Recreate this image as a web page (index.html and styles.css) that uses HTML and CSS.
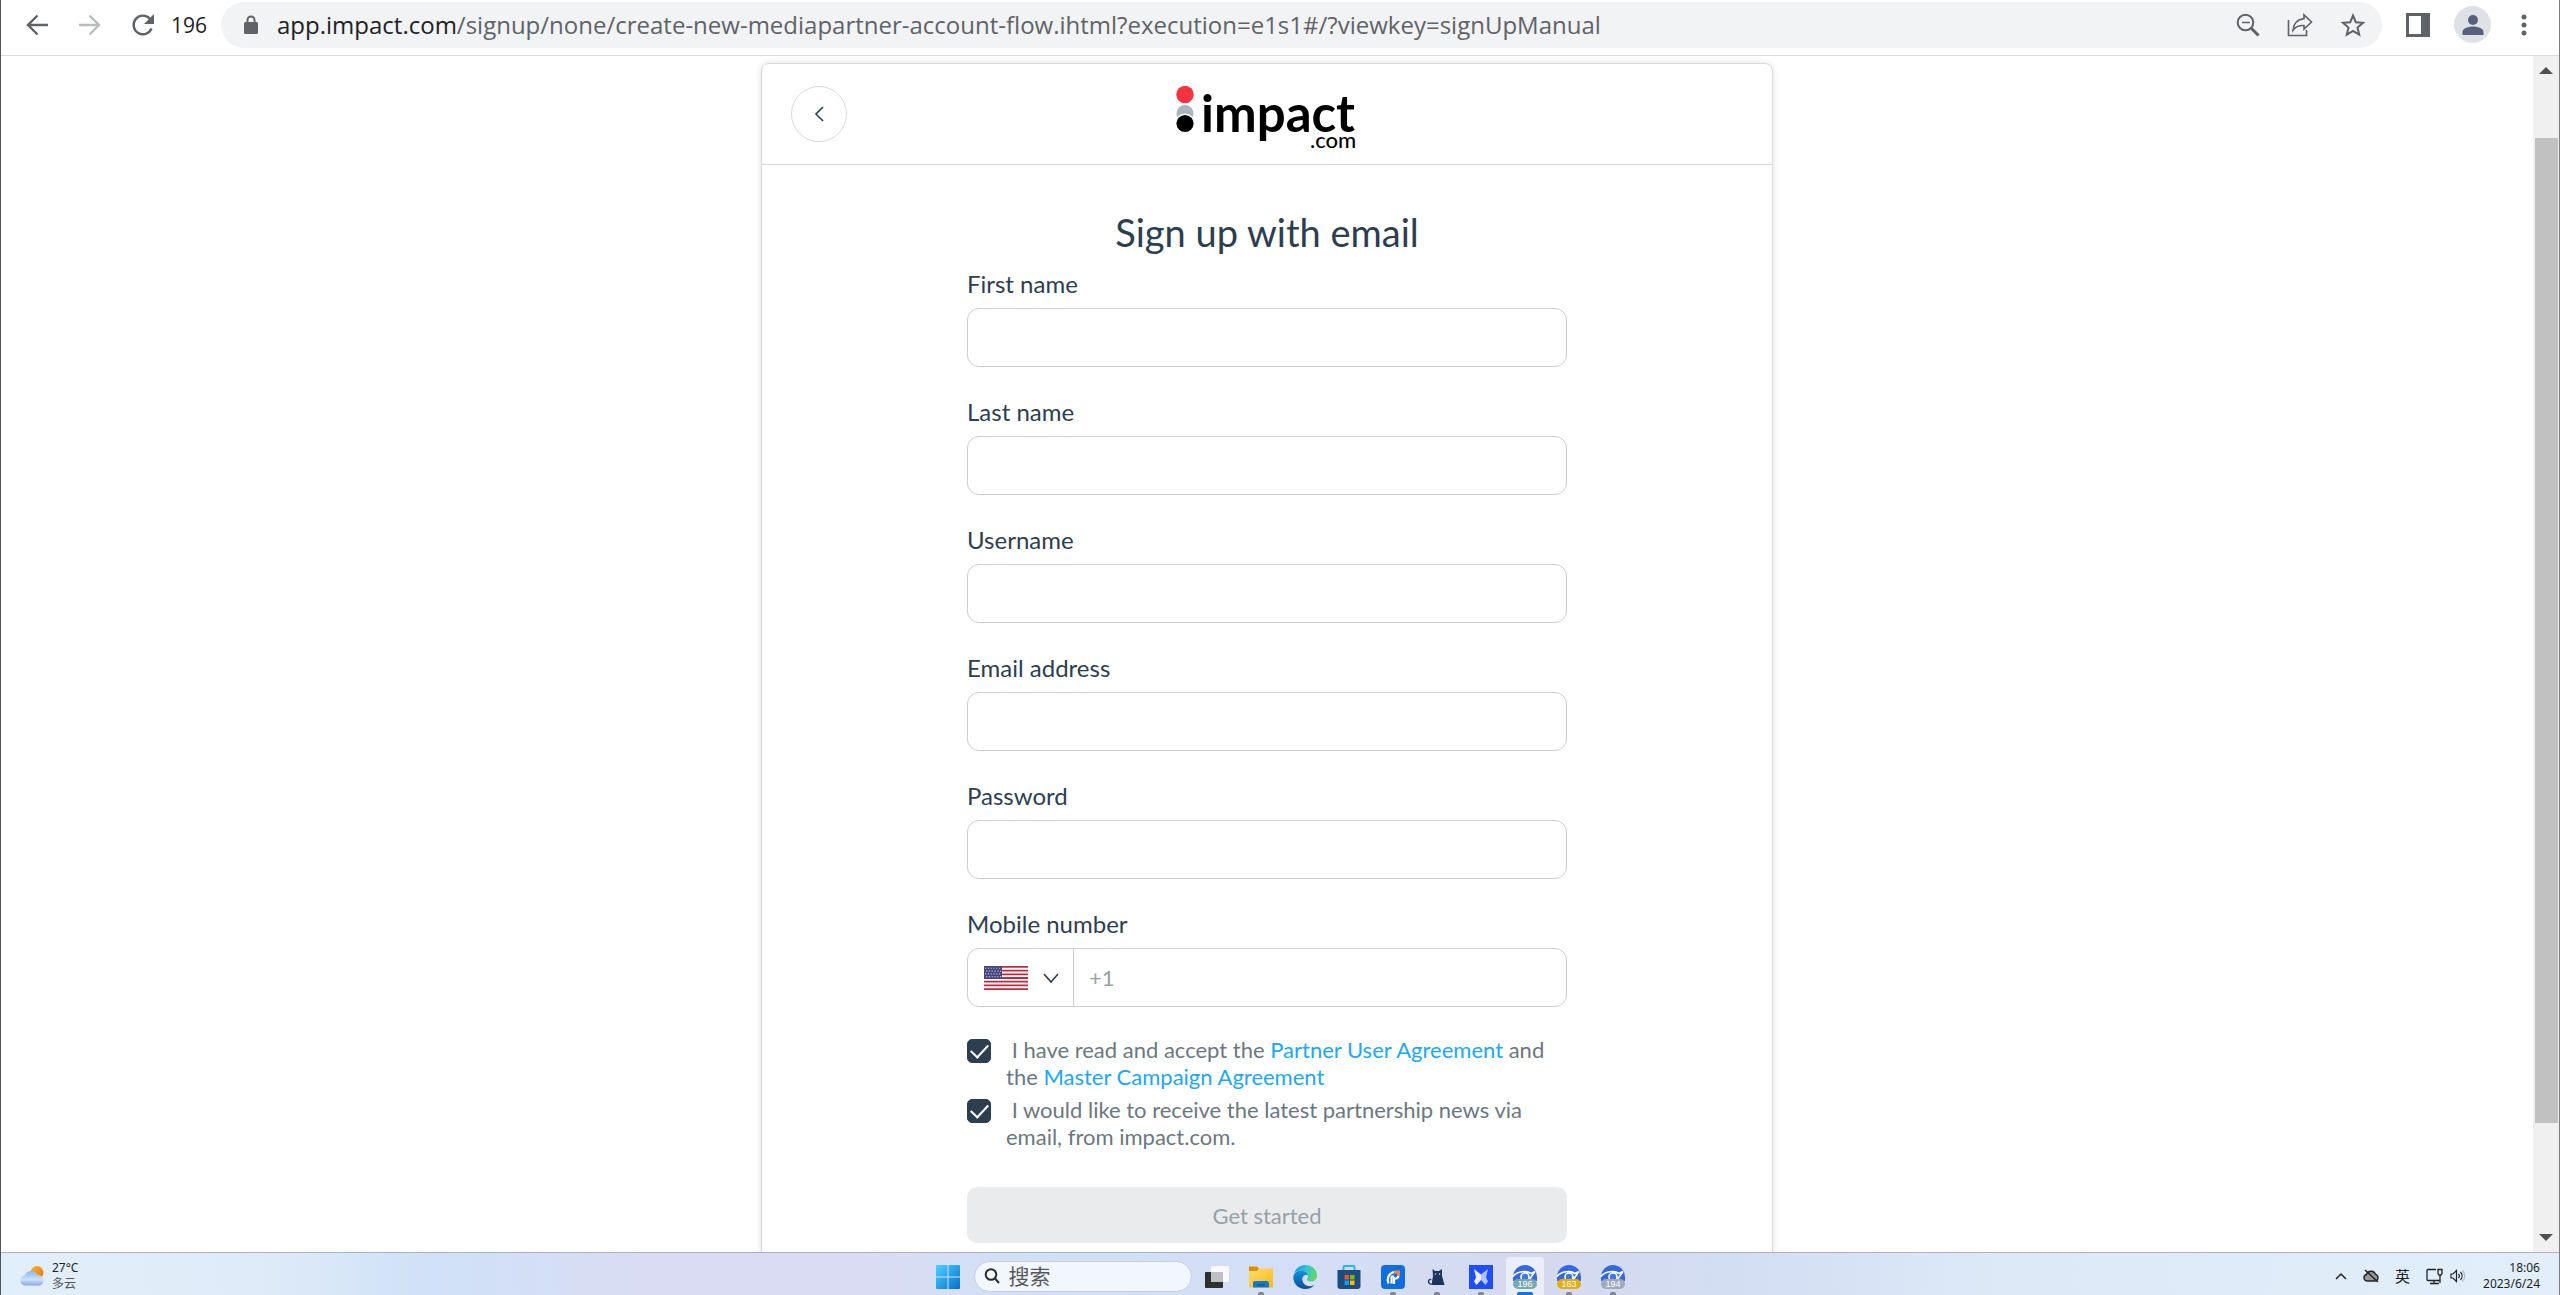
FILE: index.html
```
<!DOCTYPE html>
<html lang="en">
<head>
  <meta charset="UTF-8">
  <meta name="viewport" content="width=device-width, initial-scale=1.0">
  <title>Sign up | impact.com</title>
  <link rel="stylesheet" href="styles.css">
</head>
<body>
  <header class="toolbar">
    <div class="nav-buttons">
      <button class="icon-btn" aria-label="Back">
        <svg width="24" height="24" viewBox="0 0 24 24" fill="none" stroke="#5f6368" stroke-width="2.4"><path d="M23 12H3M12.500 2.500 3 12l9.500 9.500"/></svg>
      </button>
      <button class="icon-btn" aria-label="Forward" disabled>
        <svg width="24" height="24" viewBox="0 0 24 24" fill="none" stroke="#b9bbbe" stroke-width="2.400"><path d="M1 12h20M11.500 2.500 21 12l-9.500 9.500"/></svg>
      </button>
      <button class="icon-btn" aria-label="Reload">
        <svg width="24" height="24" viewBox="0 0 24 24"><path d="M20.500 15.500A9.300 9.300 0 1 1 18.700 5.600" fill="none" stroke="#5f6368" stroke-width="2.400"/><path d="M23 1v10H13z" fill="#5f6368"/></svg>
      </button>
    </div>
    <span class="profile-label">196</span>
    <div class="address-bar">
      <svg width="14" height="20" viewBox="0 0 14 20"><rect x="0" y="7" width="14" height="12" rx="1.500" fill="#5f6368"/><path d="M3.500 8V5a3.500 3.500 0 0 1 7 0v3" fill="none" stroke="#5f6368" stroke-width="2"/></svg>
      <div class="url"><span class="url-host">app.impact.com</span>/signup/none/create-new-mediapartner-account-flow.ihtml?execution=e1s1#/?viewkey=signUpManual</div>
      <div class="address-actions">
        <button class="icon-btn" aria-label="Zoom">
          <svg width="24" height="24" viewBox="0 0 24 24" fill="none" stroke="#5f6368"><circle cx="9.500" cy="9.500" r="7.800" stroke-width="2"/><path d="M6 9.500h8" stroke-width="1.500"/><path d="m15 15 7.500 7.500" stroke-width="3"/></svg>
        </button>
        <button class="icon-btn" aria-label="Share">
          <svg width="26" height="24" viewBox="0 0 26 24" fill="none" stroke="#5f6368" stroke-width="1.600"><path d="M1.500 7v15.500h18V17"/><path d="M17 1.800 24.500 9 17 16.200V12.500C12 12.300 8.500 13.600 6 17.200 6.500 10.500 10.500 6.300 17 5.600z"/></svg>
        </button>
        <button class="icon-btn" aria-label="Bookmark">
          <svg width="26" height="26" viewBox="0 0 26 26" fill="none" stroke="#5f6368" stroke-width="2"><path d="m13 3.500 2.800 6.700 7.200.6-5.500 4.700 1.700 7.100-6.200-3.800-6.200 3.800 1.700-7.100L3 10.800l7.200-.6z"/></svg>
        </button>
      </div>
    </div>
    <div class="toolbar-end">
      <button class="icon-btn" aria-label="Side panel">
        <svg width="24" height="24" viewBox="0 0 24 24"><path d="M0 0h24v24H0zM3 3v18h12V3z" fill="#5f6368" fill-rule="evenodd"/></svg>
      </button>
      <button class="icon-btn avatar" aria-label="Profile">
        <svg width="22" height="22" viewBox="0 0 22 22" fill="#56607a"><circle cx="11" cy="6" r="5"/><path d="M.5 21v-3C.5 14 7 12.500 11 12.500S21.500 14 21.500 18v3z"/></svg>
      </button>
      <button class="icon-btn" aria-label="Menu">
        <svg width="6" height="22" viewBox="0 0 6 22" fill="#5f6368"><circle cx="3" cy="3" r="2.500"/><circle cx="3" cy="11" r="2.500"/><circle cx="3" cy="19" r="2.500"/></svg>
      </button>
    </div>
  </header>

  <div class="viewport">
    <main class="page">
      <div class="card">
        <div class="card-header">
          <button class="back-btn" aria-label="Go back">
            <svg width="12" height="20" viewBox="0 0 12 20" fill="none" stroke="#2d3e50" stroke-width="1.600"><path d="M10 3 3 10l7 7"/></svg>
          </button>
          <svg class="logo" width="184" height="82" viewBox="0 0 184 82" role="img" aria-label="impact.com">
            <circle cx="10" cy="21.500" r="8.700" fill="#f8333f"/>
            <circle cx="10" cy="40.500" r="8.500" fill="#a9b4be"/>
            <circle cx="10" cy="50.500" r="10" fill="#fff"/>
            <circle cx="10" cy="50.500" r="8.600"/>
            <text class="logo-name" x="26" y="59">impact</text>
            <text class="logo-suffix" x="135" y="75">.com</text>
          </svg>
        </div>

        <form class="signup-form">
          <h1>Sign up with email</h1>

          <div class="field">
            <label for="first-name">First name</label>
            <input class="text-input" type="text" id="first-name">
          </div>
          <div class="field">
            <label for="last-name">Last name</label>
            <input class="text-input" type="text" id="last-name">
          </div>
          <div class="field">
            <label for="username">Username</label>
            <input class="text-input" type="text" id="username">
          </div>
          <div class="field">
            <label for="email">Email address</label>
            <input class="text-input" type="email" id="email">
          </div>
          <div class="field">
            <label for="password">Password</label>
            <input class="text-input" type="password" id="password">
          </div>
          <div class="field">
            <label for="mobile">Mobile number</label>
            <div class="phone">
              <div class="country">
                <svg width="44" height="24" viewBox="0 0 44 26" preserveAspectRatio="none">
                  <rect width="44" height="26" fill="#fff"/>
                  <path d="M0 1h44M0 5h44M0 9h44M0 13h44M0 17h44M0 21h44M0 25h44" stroke="#c02a41" stroke-width="2"/>
                  <rect width="18" height="14" fill="#46467f"/>
                  <path d="M1 2.500h16M2 5.500h16M1 8.500h16M2 11.500h16" stroke="#b9b9d2" stroke-width="1.200" stroke-dasharray="1.200 1.600"/>
                </svg>
                <svg width="16" height="12" viewBox="0 0 16 12" fill="none" stroke="#2d3e50" stroke-width="1.600"><path d="m1 2 7 8 7-8"/></svg>
                <select class="country-select" aria-label="Country code">
                  <option>+1</option>
                </select>
              </div>
              <input class="phone-input" type="tel" id="mobile" placeholder="+1">
            </div>
          </div>

          <div class="consents">
            <div class="consent">
              <input type="checkbox" id="terms" checked>
              <label for="terms">&nbsp;I have read and accept the <a href="#">Partner User Agreement</a> and the <a href="#">Master Campaign Agreement</a></label>
            </div>
            <div class="consent">
              <input type="checkbox" id="news" checked>
              <label for="news">&nbsp;I would like to receive the latest partnership news via email, from impact.com.</label>
            </div>
          </div>

          <button class="submit-btn" type="submit" disabled>Get started</button>
        </form>
      </div>
    </main>
    <div class="scrollbar">
      <svg width="14" height="8" viewBox="0 0 14 8"><path d="M7 0 14 7H0z" fill="#505050"/></svg>
      <div class="scroll-track"><div class="scroll-thumb"></div></div>
      <svg width="14" height="8" viewBox="0 0 14 8"><path d="M0 0h14L7 7z" fill="#505050"/></svg>
    </div>
  </div>

  <footer class="taskbar">
    <div class="weather">
      <svg width="24" height="22" viewBox="0 0 24 22">
        <defs>
          <linearGradient id="sun" x1="0" y1="0" x2="1" y2="1"><stop offset="0" stop-color="#f9b52c"/><stop offset="1" stop-color="#f0700c"/></linearGradient>
          <linearGradient id="cloud" x1="0" y1="0" x2="0" y2="1"><stop offset="0" stop-color="#8fb4ef"/><stop offset=".6" stop-color="#cfe0fb"/><stop offset="1" stop-color="#7fa4e6"/></linearGradient>
        </defs>
        <circle cx="17" cy="7.500" r="6.500" fill="url(#sun)"/>
        <path d="M5 20.500a5 5 0 0 1-.5-9.900 7 7 0 0 1 13-.6A5.300 5.300 0 0 1 19 20.500z" fill="url(#cloud)"/>
      </svg>
      <div class="weather-text"><span>27°C</span><span class="muted">多云</span></div>
    </div>

    <div class="apps">
      <button class="app" aria-label="Start">
        <svg width="24" height="24" viewBox="0 0 24 24">
          <defs><linearGradient id="win" x1="0" y1="0" x2="1" y2="1"><stop offset="0" stop-color="#4fd0ff"/><stop offset="1" stop-color="#0072d0"/></linearGradient></defs>
          <path d="M1 0h10.500v11.500H0V1a1 1 0 0 1 1-1zM12.500 0H23a1 1 0 0 1 1 1v10.500H12.500zM0 12.500h11.500V24H1a1 1 0 0 1-1-1zM12.500 12.500H24V23a1 1 0 0 1-1 1H12.500z" fill="url(#win)"/>
        </svg>
      </button>
      <label class="search">
        <svg width="16" height="16" viewBox="0 0 16 16" fill="none" stroke="#2b2b2b" stroke-width="2"><circle cx="7" cy="6.500" r="5.300"/><path d="m11 10.500 4 4.500"/></svg>
        <input type="text" placeholder="搜索" aria-label="搜索">
      </label>
      <button class="app" aria-label="Task view">
        <svg width="24" height="24" viewBox="0 0 24 24"><rect x="0" y="7" width="18" height="16" rx="1" fill="#2f3030"/><rect x="6" y="1" width="18" height="16" rx="1" fill="#fafafa"/><path d="M6 7h12v10H6z" fill="#bfc0c1"/></svg>
      </button>
      <button class="app running" aria-label="File Explorer">
        <svg width="24" height="24" viewBox="0 0 24 24">
          <defs><linearGradient id="folder" x1="0" y1="0" x2="1" y2="1"><stop offset="0" stop-color="#ffdd70"/><stop offset="1" stop-color="#fdb813"/></linearGradient></defs>
          <path d="M0 1.500h8l2 2-2 3H0z" fill="#d5930b"/><path d="M0 6h8l2-2.500h14V22.500H0z" fill="url(#folder)"/><path d="M4 22.500V18a2 2 0 0 1 2-2h12a2 2 0 0 1 2 2v4.500z" fill="#1379c8"/><path d="M8 20h8" stroke="#0a5799" stroke-width="1.500"/>
        </svg>
      </button>
      <button class="app" aria-label="Edge">
        <svg width="24" height="24" viewBox="0 0 24 24">
          <defs>
            <linearGradient id="edge-top" x1="0" y1="0.400" x2="1" y2="0.600"><stop offset="0" stop-color="#1b9de2"/><stop offset=".5" stop-color="#36c3d3"/><stop offset="1" stop-color="#62da55"/></linearGradient>
            <linearGradient id="edge-low" x1="0" y1="0" x2="0" y2="1"><stop offset="0" stop-color="#1590dd"/><stop offset="1" stop-color="#0b4d9c"/></linearGradient>
          </defs>
          <path d="M.8 9C2.500 3.500 7 0 12.500 0 19 0 24 4.800 24 10.500c0 4-3 6-6 6-2.500 0-4.200-1-4.200-2 0-.8 1.200-1.300 1.200-3.300C15 7.500 11 5.500 7.500 5.500 4.500 5.500 2 7 .8 9z" fill="url(#edge-top)"/>
          <path d="M.5 10.500C1.500 7.500 4.500 5.500 7.500 5.500c3.500 0 7 1.800 7.500 5-1-1-2.500-1-3.500-.3C7.500 12.500 9 19.500 15 21c2.500.6 5-.3 6.800-1.500C19.500 22.500 16 24 12 24 5 24-.8 18 .5 10.500z" fill="url(#edge-low)"/>
        </svg>
      </button>
      <button class="app" aria-label="Microsoft Store">
        <svg width="24" height="24" viewBox="0 0 24 24"><path d="M6.500 6V2a1 1 0 0 1 1-1h9a1 1 0 0 1 1 1v4" fill="none" stroke="#24b8e8" stroke-width="2"/><path d="M.5 5h23v16a3 3 0 0 1-3 3h-17a3 3 0 0 1-3-3z" fill="#1e4b80"/><path d="M7.500 10H12v4.500H7.500z" fill="#f25022"/><path d="M13 10h4.500v4.500H13z" fill="#7fba00"/><path d="M7.500 15.500H12V20H7.500z" fill="#00a4ef"/><path d="M13 15.500h4.500V20H13z" fill="#ffb900"/></svg>
      </button>
      <button class="app running" aria-label="Remote desktop">
        <svg width="24" height="24" viewBox="0 0 24 24"><rect width="24" height="24" rx="4" fill="#116ee0"/><path d="M7.500 18.500c-2-4-.5-10 5.500-11.500M10.500 18.500v-6c0-1 1-1.500 1.800-.9M13 19v-6c1 1 4.500.5 4.500-2.500" fill="none" stroke="#fff" stroke-width="2.200"/><path d="M13 5.500h6V11h-3V8.500h-3z" fill="#f58633"/></svg>
      </button>
      <button class="app running" aria-label="Cat">
        <svg width="24" height="24" viewBox="0 0 24 24"><path d="M7.500 4l2.500 2h4l3-2v7l2.500 9H8c-2-.5-.5-5 0-9z" fill="#1c3558"/><path d="M9 18.500c-3 1.500-5.500 0-5.500-2s2-2.500 2.500-1.500" fill="none" stroke="#1c3558" stroke-width="1.400"/><circle cx="10.500" cy="9" r=".8" fill="#cdd9ee"/><circle cx="14.500" cy="9" r=".8" fill="#cdd9ee"/></svg>
      </button>
      <button class="app running" aria-label="Butterfly">
        <svg width="24" height="24" viewBox="0 0 24 24"><rect width="24" height="24" fill="#1f4dfa"/><path d="m5 4 7 5.500V15l-4.500 5L5 16.500l2-4z" fill="#fff" opacity=".9"/><path d="m19 4-7 5.500V15l4.500 5 2.500-3.500-2-4z" fill="#fff" opacity=".65"/></svg>
      </button>
      <button class="app active" aria-label="Browser 196">
        <svg width="24" height="24" viewBox="0 0 24 24"><path d="M0 12a12 12 0 0 1 24 0v4H0z" fill="#3568e0"/><path d="M0 11.500C4 6 14 5.500 18 8.500L22 6.500M22 6.500 16 15" fill="none" stroke="#fff" stroke-width="1.600"/><circle cx="12" cy="12" r="4" fill="#3c78e8" stroke="#fff" stroke-width="1.600"/><rect y="14" width="24" height="10" rx="5" fill="#79a9ae"/><text class="badge-text" x="12" y="22">196</text></svg>
      </button>
      <button class="app running" aria-label="Browser 163">
        <svg width="24" height="24" viewBox="0 0 24 24"><path d="M0 12a12 12 0 0 1 24 0v4H0z" fill="#3568e0"/><path d="M0 11.500C4 6 14 5.500 18 8.500L22 6.500M22 6.500 16 15" fill="none" stroke="#fff" stroke-width="1.600"/><circle cx="12" cy="12" r="4" fill="#3c78e8" stroke="#fff" stroke-width="1.600"/><rect y="14" width="24" height="10" rx="5" fill="#e2ac17"/><text class="badge-text" x="12" y="22">163</text></svg>
      </button>
      <button class="app running" aria-label="Browser 194">
        <svg width="24" height="24" viewBox="0 0 24 24"><path d="M0 12a12 12 0 0 1 24 0v4H0z" fill="#3568e0"/><path d="M0 11.500C4 6 14 5.500 18 8.500L22 6.500M22 6.500 16 15" fill="none" stroke="#fff" stroke-width="1.600"/><circle cx="12" cy="12" r="4" fill="#3c78e8" stroke="#fff" stroke-width="1.600"/><rect y="14" width="24" height="10" rx="5" fill="#9fabbc"/><text class="badge-text" x="12" y="22">194</text></svg>
      </button>
    </div>

    <div class="tray">
      <svg width="12" height="8" viewBox="0 0 12 8" fill="none" stroke="#222" stroke-width="1.500"><path d="m1 7 5-5 5 5"/></svg>
      <svg width="16" height="14" viewBox="0 0 16 14"><path d="M4 12a3.300 3.300 0 0 1-.5-6.500 4.800 4.800 0 0 1 9-.2A3.500 3.500 0 0 1 12.500 12z" fill="#999" stroke="#222" stroke-width="1.300"/><path d="m2 1 13 12" stroke="#222" stroke-width="1.500"/></svg>
      <span class="ime">英</span>
      <span class="tray-pair">
        <svg width="17" height="17" viewBox="0 0 17 17" fill="none" stroke="#222" stroke-width="1.300"><path d="M10 1.500H2a1 1 0 0 0-1 1v9a1 1 0 0 0 1 1h12M8 12.500v3M4 15.500h9M12 1.500h4v4l-1 1.500h-2l-1-1.500zM14 7v8"/></svg>
        <svg width="17" height="14" viewBox="0 0 17 14" fill="none" stroke="#222" stroke-width="1.200"><path d="M1 5h2l3.500-3.500v11L3 9H1zM8.500 5a3 3 0 0 1 0 4M10.500 3a6 6 0 0 1 0 8"/><path d="M12.500 1.500a8 8 0 0 1 0 11" stroke="#b5bcc4"/></svg>
      </span>
      <div class="clock"><span>18:06</span><span>2023/6/24</span></div>
    </div>
  </footer>
</body>
</html>
```
FILE: styles.css
```
* {
  margin: 0;
  padding: 0;
  box-sizing: border-box;
}

body {
  height: 100vh;
  display: flex;
  flex-direction: column;
  overflow: hidden;
  font-family: "Noto Sans", "Noto Sans CJK SC", sans-serif;
  background: #fff;
  color: #2d3e50;
  border-left: 1px solid #55565a;
  border-right: 1px solid #7c7d80;
}

button,
input {
  font-family: inherit;
}

svg {
  display: block;
  flex-shrink: 0;
}

/* Browser toolbar */
.toolbar {
  display: flex;
  align-items: center;
  height: 56px;
  padding: 0 32px 6px 24px;
  border-bottom: 1px solid #dadce0;
  font-family: "Open Sans", sans-serif;
  flex-shrink: 0;
}

.icon-btn {
  border: none;
  background: none;
  display: flex;
  align-items: center;
  justify-content: center;
}

.nav-buttons {
  display: flex;
  gap: 29px;
}

.profile-label {
  margin: 0 14px 0 16px;
  font-size: 21px;
  color: #202124;
}

.address-bar {
  flex: 1;
  height: 46px;
  display: flex;
  align-items: center;
  padding: 0 16px 0 23px;
  background: #f1f3f4;
  border-radius: 23px;
}

.url {
  flex: 1;
  margin-left: 19px;
  font-size: 24px;
  line-height: 32px;
  white-space: nowrap;
  color: #5f6368;
}

.url-host {
  color: #202124;
}

.address-actions {
  display: flex;
  gap: 27px;
}

.toolbar-end {
  display: flex;
  align-items: center;
  gap: 24px;
  margin-left: 24px;
}

.avatar {
  width: 37px;
  height: 37px;
  margin-right: 6px;
  border-radius: 50%;
  background: #dee1e6;
}

/* Page area */
.viewport {
  flex: 1;
  min-height: 0;
  display: flex;
}

.page {
  flex: 1;
  padding-top: 7px;
  overflow: hidden;
  font-family: Lato, sans-serif;
}

.card {
  width: 100%;
  max-width: 1012px;
  margin: 0 auto;
  border: 1px solid #d6dadd;
  border-radius: 8px;
  box-shadow: 0 0 6px rgba(0, 0, 0, 0.12);
}

.card-header {
  display: grid;
  grid-template-columns: 1fr auto 1fr;
  align-items: center;
  height: 101px;
  padding: 0 29px;
  border-bottom: 1px solid #d6dadd;
}

.back-btn {
  width: 56px;
  height: 56px;
  display: flex;
  align-items: center;
  justify-content: center;
  background: #fff;
  border: 1px solid #d6dadd;
  border-radius: 50%;
}

.logo-name {
  font: 700 51px Lato, sans-serif;
}

.logo-suffix {
  font: 500 22px Lato, sans-serif;
}

.signup-form {
  width: 100%;
  max-width: 600px;
  margin: 0 auto;
  padding: 43px 0 40px;
}

h1 {
  margin-bottom: 12px;
  font-size: 38px;
  line-height: 48px;
  font-weight: 400;
  text-align: center;
}

.field {
  margin-bottom: 29px;
}

.field label {
  display: block;
  margin-bottom: 9px;
  font-size: 24px;
  line-height: 31px;
}

.text-input,
.phone {
  width: 100%;
  height: 59px;
  border: 1px solid #c9ced3;
  border-radius: 12px;
  background: #fff;
}

.text-input {
  display: block;
  padding: 0 16px;
  font-size: 22px;
}

.phone {
  display: flex;
}

.country {
  position: relative;
  display: flex;
  align-items: center;
  gap: 15px;
  padding: 0 14px 0 16px;
  border-right: 1px solid #c9ced3;
}

/* The native drop-down lies over the flag */
.country-select {
  position: absolute;
  inset: 0;
  width: 100%;
  opacity: 0;
}

.phone-input {
  flex: 1;
  padding: 0 15px;
  border: none;
  border-radius: 12px;
  font-size: 22px;
  background: none;
}

.phone-input::placeholder {
  color: #96a0a8;
}

.consents {
  display: flex;
  flex-direction: column;
  gap: 6px;
  margin-bottom: 37px;
}

.consent {
  display: flex;
  align-items: flex-start;
  gap: 15px;
  font-size: 22px;
  line-height: 27px;
  color: #6c7781;
}

.consent input {
  appearance: none;
  flex-shrink: 0;
  width: 24px;
  height: 24px;
  margin-top: 3px;
  border: 1px solid #2d3e50;
  border-radius: 5px;
  display: grid;
  place-items: center;
}

.consent input:checked {
  background: #2d3e50;
}

.consent input:checked::before {
  content: "";
  width: 15px;
  height: 8px;
  border-left: 2px solid #fff;
  border-bottom: 2px solid #fff;
  transform: translateY(-2px) rotate(-47deg);
}

.consent a {
  color: #1ea7f5;
  text-decoration: none;
}

.submit-btn {
  width: 100%;
  height: 56px;
  border: none;
  border-radius: 10px;
  background: #e9ebec;
  color: #96a0a8;
  font-size: 22px;
}

.scrollbar {
  width: 26px;
  padding: 11px 0 10px;
  display: flex;
  flex-direction: column;
  align-items: center;
  background: #f0f0f0;
}

.scroll-track {
  flex: 1;
  align-self: stretch;
  padding: 0 1px;
}

.scroll-thumb {
  height: 85%;
  margin: 63px 0 0 1px;
  background: #c1c1c1;
}

/* Windows taskbar */
.taskbar {
  display: grid;
  grid-template-columns: 1fr auto 1fr;
  align-items: center;
  height: 43px;
  flex-shrink: 0;
  border-top: 1px solid #a9b3c1;
  background: linear-gradient(90deg, #e2eef9 0%, #dfebf8 10%, #cfe1f8 17%, #d9dcf2 25%, #d9dcf2 34%, #d2e0f7 40%, #d5def5 52%, #d5d9ee 60%, #d3def3 68%, #dde9f7 78%, #e2eef9 100%);
  font-size: 12px;
  line-height: 16px;
  color: #1f1f1f;
}

.weather {
  display: flex;
  align-items: center;
  gap: 8px;
  padding: 4px 0 0 19px;
}

.weather-text,
.clock {
  display: flex;
  flex-direction: column;
}

.muted {
  color: #555;
}

.apps {
  display: flex;
  align-items: center;
  height: 42px;
}

.app {
  position: relative;
  width: 44px;
  height: 42px;
  padding-top: 6px;
  border: none;
  background: none;
  display: flex;
  align-items: center;
  justify-content: center;
}

.running::after,
.active::after {
  content: "";
  position: absolute;
  bottom: 0;
  left: 19px;
  width: 6px;
  height: 3px;
  border-radius: 2px 2px 0 0;
  background: #84868f;
}

.active::before {
  content: "";
  position: absolute;
  inset: 4px 3px 0;
  border-radius: 4px 4px 0 0;
  background: #ebeef8;
}

.active svg {
  position: relative;
}

.active::after {
  left: 14px;
  width: 16px;
  background: #0f78d4;
}

.badge-text {
  font: 9px "Liberation Sans", sans-serif;
  text-anchor: middle;
  fill: #fff;
}

.search {
  display: flex;
  align-items: center;
  width: 218px;
  height: 31px;
  margin: 4px 3px 0 4px;
  padding-left: 9px;
  border: 1px solid #c3cee3;
  border-radius: 16px;
  background: #f2f6fd;
}

.search input {
  width: 100%;
  padding-left: 9px;
  border: none;
  outline: none;
  background: none;
  font-size: 21px;
  line-height: 28px;
}

.search input::placeholder {
  color: #55585e;
}

.tray {
  display: flex;
  align-items: center;
  justify-content: flex-end;
  gap: 16px;
  padding: 4px 19px 0 0;
}

.ime {
  font-size: 15px;
}

.tray-pair {
  display: flex;
  align-items: center;
  gap: 7px;
}

.clock {
  text-align: right;
}
```
